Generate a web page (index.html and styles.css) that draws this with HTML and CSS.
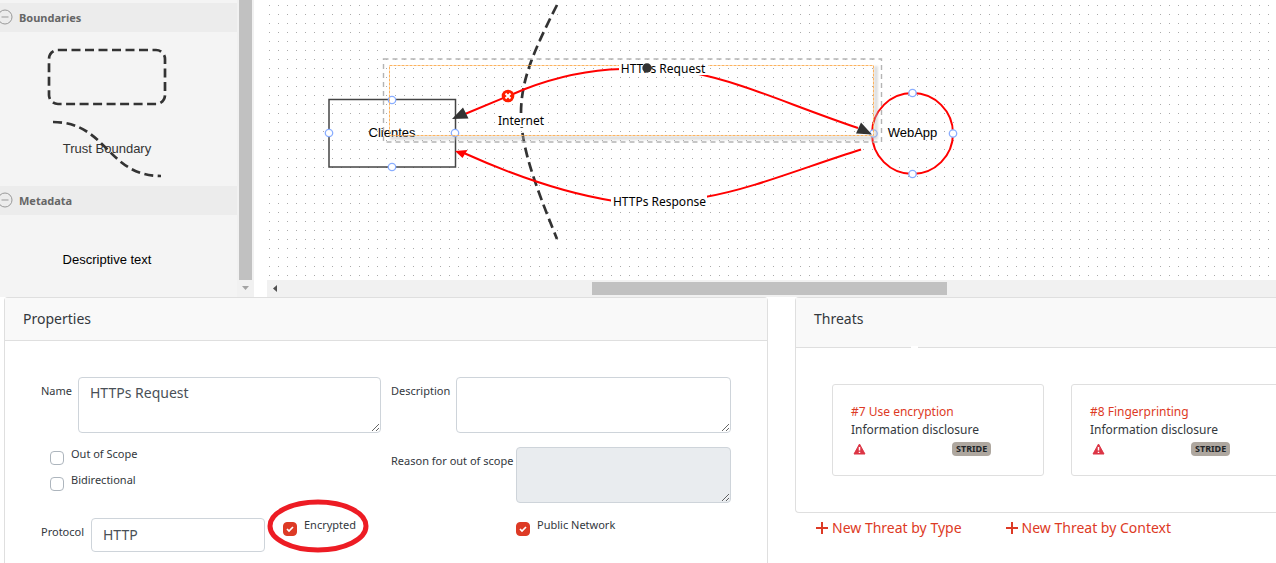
FILE: index.html
```html
<!DOCTYPE html>
<html lang="en">
<head>
<meta charset="utf-8">
<title>Threat model editor</title>
<link rel="stylesheet" href="styles.css">
</head>
<body>
<section class="workspace">
  <aside class="stencil">
    <div class="stencil-groups">
      <h3 class="group-title"><svg class="toggle" viewBox="0 0 18 18" width="18" height="18"><circle cx="9" cy="9" r="7"/><path d="M5.500 9h7"/></svg>Boundaries</h3>
      <svg class="shapes" width="237" height="154" viewBox="0 32 237 154">
        <rect class="boundary" x="49" y="50" width="116" height="54" rx="9" stroke-dasharray="9 4.500"/>
        <text class="shape-text soft" x="107" y="153">Trust Boundary</text>
        <path class="boundary" d="M53 122C107 122 107 176 161 176" stroke-dasharray="9 4.500"/>
      </svg>
      <h3 class="group-title"><svg class="toggle" viewBox="0 0 18 18" width="18" height="18"><circle cx="9" cy="9" r="7"/><path d="M5.500 9h7"/></svg>Metadata</h3>
      <svg class="shapes" width="237" height="80" viewBox="0 215 237 80">
        <text class="shape-text" x="107" y="264">Descriptive text</text>
      </svg>
    </div>
    <div class="scroll-y"><div class="thumb-y"></div><svg class="arrow-y" width="17" height="17"><path d="M5 6h7l-3.500 4z"/></svg></div>
  </aside>
  <main class="canvas">
    <div class="paper">
      <svg class="diagram" width="1009" height="280" viewBox="267 0 1009 280">
        <defs><filter id="glow" x="-10%" y="-10%" width="120%" height="130%"><feGaussianBlur stdDeviation="1"/></filter></defs>
        <path class="boundary" d="M557 5C509 99 509 121 557 239" stroke-dasharray="10 5"/>
        <rect class="label-bg" x="497" y="113" width="49" height="14"/>
        <text class="edge-text" x="521" y="125">Internet</text>
        <rect class="entity" x="329" y="99.500" width="126.500" height="67.500"/>
        <text class="node-text" x="392" y="137">Clientes</text>
        <circle class="process" cx="912.500" cy="133.500" r="40.500"/>
        <text class="node-text" x="912.500" y="137">WebApp</text>
        <circle class="port" cx="392" cy="100" r="3.700"/>
        <circle class="port" cx="455" cy="133" r="3.700"/>
        <circle class="port" cx="392" cy="167" r="3.700"/>
        <circle class="port" cx="329" cy="133" r="3.700"/>
        <circle class="port" cx="912.500" cy="93" r="3.700"/>
        <circle class="port" cx="953" cy="133.500" r="3.700"/>
        <circle class="port" cx="912.500" cy="174" r="3.700"/>
        <circle class="port" cx="873.500" cy="133.500" r="3.700"/>
        <path class="shade" d="M390 138H876V66" filter="url(#glow)"/>
        <rect class="outer-frame" x="383.500" y="59" width="498" height="83"/>
        <rect class="inner-frame" x="389.500" y="65.500" width="484" height="70"/>
        <path class="flow" d="M465 153.500C515 176 563 193 614 201M705 197C752 189 805 167 861 149.500"/>
        <path class="flow" d="M465 114L525 89C556 77 586 70 622 69M694 73C744 83 790 105 858 128"/>
        <path class="flow-head" d="M455 151L467.500 150L462.500 158z"/>
        <path class="handle" d="M452 119L463 107.500L468.500 118.500zM872 134.500L861 122.500L856 133.500z"/>
        <rect class="label-bg" x="619" y="61" width="89" height="14"/>
        <text class="edge-text" x="663" y="73">HTTPs Request</text>
        <rect class="label-bg" x="611" y="194" width="96" height="14"/>
        <text class="edge-text" x="659.500" y="206">HTTPs Response</text>
        <circle class="handle" cx="647" cy="68" r="4.700"/>
        <circle class="remove" cx="508" cy="96" r="6.300"/>
        <path class="remove-x" d="M505.500 93.500l5 5m0-5l-5 5"/>
      </svg>
    </div>
    <div class="scroll-x"><svg class="arrow-x" width="17" height="17"><path d="M10 5v7L6 8.500z"/></svg><div class="thumb-x"></div></div>
  </main>
</section>
<section class="details">
  <section class="card properties">
    <h2 class="card-title">Properties</h2>
    <form class="fields">
      <div class="field name"><label for="name">Name</label><textarea id="name">HTTPs Request</textarea></div>
      <div class="field description"><label for="description">Description</label><textarea id="description"></textarea></div>
      <div class="checks">
        <div class="check"><input type="checkbox" id="scope"><label for="scope">Out of Scope</label></div>
        <div class="check"><input type="checkbox" id="both"><label for="both">Bidirectional</label></div>
      </div>
      <div class="field reason"><label for="reason">Reason for out of scope</label><textarea id="reason" disabled></textarea></div>
      <div class="field protocol">
        <label for="protocol">Protocol</label>
        <select id="protocol"><option>HTTP</option></select>
        <div class="check encrypted"><input type="checkbox" id="encrypted" checked><label for="encrypted">Encrypted</label>
          <svg class="mark" width="104" height="56" viewBox="0 0 104 56"><ellipse cx="52" cy="28" rx="48" ry="24"/></svg>
        </div>
      </div>
      <div class="check public"><input type="checkbox" id="public" checked><label for="public">Public Network</label></div>
    </form>
  </section>
  <section class="threats">
    <div class="card threat-card">
      <h2 class="card-title threat-title">Threats</h2>
      <div class="threat-list">
        <article class="threat">
          <a href="#">#7 Use encryption</a>
          <p>Information disclosure</p>
          <div class="meta"><svg class="warn" width="13" height="12" viewBox="0 0 13 12"><path d="M6.500 1L12 11H1z"/><path class="bang" d="M6.500 4v3.500M6.500 8.800v1.200"/></svg><span class="badge">STRIDE</span></div>
        </article>
        <article class="threat">
          <a href="#">#8 Fingerprinting</a>
          <p>Information disclosure</p>
          <div class="meta"><svg class="warn" width="13" height="12" viewBox="0 0 13 12"><path d="M6.500 1L12 11H1z"/><path class="bang" d="M6.500 4v3.500M6.500 8.800v1.200"/></svg><span class="badge">STRIDE</span></div>
        </article>
      </div>
    </div>
    <nav class="actions">
      <a href="#"><svg class="plus" width="12" height="12"><path d="M6 0v12M0 6h12"/></svg>New Threat by Type</a>
      <a href="#"><svg class="plus" width="12" height="12"><path d="M6 0v12M0 6h12"/></svg>New Threat by Context</a>
    </nav>
  </section>
</section>
</body>
</html>
```
FILE: styles.css
```css
* { box-sizing: border-box; }
body {
  margin: 0;
  height: 100vh;
  display: flex;
  flex-direction: column;
  overflow: hidden;
  background: #fff;
  color: #33383d;
  font-family: "Noto Sans", sans-serif;
  font-size: 12px;
}
h2, h3, p { margin: 0; font-weight: 400; }
svg { display: block; flex: none; }
a { color: #dd3a25; text-decoration: none; }

.workspace { display: flex; gap: 13px; flex: none; }
.stencil { display: flex; flex: none; background: #f4f4f4; }
.stencil-groups { padding-top: 3px; }
.group-title {
  display: flex;
  align-items: center;
  gap: 5px;
  height: 29px;
  margin-left: -4px;
  padding-bottom: 1px;
  background: #ececec;
  color: #666;
  font-size: 11px;
  font-weight: 700;
}
.toggle { fill: none; stroke: #999; stroke-width: 1; }
.boundary { fill: none; stroke: #333; stroke-width: 2.700; }
.shape-text { font: 13px "Liberation Sans", sans-serif; text-anchor: middle; fill: #000; }
.soft { fill: #333; }
.scroll-y { display: flex; flex-direction: column; width: 17px; background: #f1f1f1; }
.thumb-y { flex: 1; margin: 0 2px; background: #c1c1c1; }
.arrow-y { fill: #a3a3a3; }

.canvas { flex: 1; min-width: 0; display: flex; flex-direction: column; }
.paper {
  flex: 1;
  overflow: hidden;
  background-image: linear-gradient(90deg, #fff 0 2px, transparent 2px 3px, #fff 3px), linear-gradient(#fff 0 5px, #aaa 5px 6px, #fff 6px);
  background-size: 9px 9px;
}
.scroll-x { display: flex; height: 17px; background: #f1f1f1; }
.arrow-x { fill: #505050; }
.thumb-x { width: 35.200%; margin: 2px 0 2px 30.500%; background: #c1c1c1; }

.edge-text { font: 12px "Noto Sans", sans-serif; text-anchor: middle; fill: #000; }
.node-text { font: 13px "Liberation Sans", sans-serif; text-anchor: middle; fill: #000; }
.label-bg { fill: #fff; }
.entity { fill: none; stroke: #444; stroke-width: 1.500; }
.process { fill: none; stroke: #f00; stroke-width: 2; }
.port { fill: #fff; stroke: #8aaeff; stroke-width: 1.300; }
.shade { fill: none; stroke: #bbb; stroke-width: 4; opacity: .45; }
.outer-frame { fill: none; stroke: #b4b4b4; stroke-width: 1.400; stroke-dasharray: 5 4; }
.inner-frame { fill: none; stroke: #fcb35f; stroke-dasharray: 3 1; }
.flow { fill: none; stroke: #f00; stroke-width: 2; }
.flow-head { fill: #f00; }
.handle { fill: #333; }
.remove { fill: #ff1d00; }
.remove-x { stroke: #fff; stroke-width: 2; }

.details {
  flex: 1;
  min-height: 0;
  display: grid;
  grid-template-columns: minmax(0, 764fr) minmax(0, 481fr);
  gap: 27px;
  padding-left: 4px;
}
.card { border: 1px solid #dfdfdf; border-radius: 4px; }
.properties { border-bottom: 0; }
.card-title {
  height: 43px;
  padding: 0 18px;
  border-bottom: 1px solid #dfdfdf;
  background: #f9f9f9;
  font-size: 14px;
  line-height: 41px;
}
.fields {
  display: grid;
  grid-template-columns: minmax(0, 1fr) minmax(0, 1fr);
  gap: 14px 10px;
  padding: 36px;
}
.field { display: flex; gap: 9px; align-items: flex-start; }
label { font-size: 11px; line-height: 14px; white-space: nowrap; }
.field > label { flex: none; padding-top: 7px; }
.name > label { width: 28px; }
.description > label { width: 56px; }
.reason > label { width: 116px; }
.protocol > label { width: 41px; }
textarea, select {
  flex: 1;
  min-width: 0;
  border: 1px solid #ced4da;
  border-radius: 4px;
  background: #fff;
  color: #495057;
  font: 14px/20px "Noto Sans", sans-serif;
}
textarea { height: 56px; padding: 5px 11px; resize: both; }
textarea:disabled { background: #e9ecef; }
.checks { display: grid; align-content: start; gap: 12px; padding-left: 9px; }
.check { display: flex; gap: 7px; align-items: flex-start; }
.check input {
  appearance: none;
  flex: none;
  width: 14px;
  height: 14px;
  margin: 4px 0 0;
  border: 1px solid #adb5bd;
  border-radius: 4px;
}
.checks .check { height: 14px; }
.check input:checked {
  border-color: #dd3a25;
  background: #dd3a25 url("data:image/svg+xml,%3Csvg xmlns='http://www.w3.org/2000/svg' viewBox='0 0 8 8'%3E%3Cpath fill='none' stroke='%23fff' stroke-width='1.700' d='M1 4l2 2 4-4'/%3E%3C/svg%3E") center / 8px 8px no-repeat;
}
.protocol, .public { padding-top: 1px; }
.protocol select { flex: none; width: 174px; height: 34px; padding: 0 11px; appearance: none; }
.encrypted { position: relative; margin-left: 9px; }
.mark { position: absolute; left: -17px; top: -20px; fill: none; stroke: #ed1c24; stroke-width: 5; pointer-events: none; }
.public { padding-left: 125px; }

.threats { overflow: hidden; }
.threat-card { border-right: 0; border-radius: 4px 0 0 4px; }
.threat-title { position: relative; height: 50px; }
.threat-title::after { content: ""; position: absolute; left: 115px; bottom: -2px; width: 7px; height: 3px; background: #fff; }
.threat-list { display: flex; gap: 27px; padding: 36px; }
.threat { flex: none; width: 212px; padding: 18px 18px 17px; border: 1px solid #dfdfdf; border-radius: 3px; line-height: 18px; }
.threat a { display: block; }
.meta { display: grid; grid-template-columns: 101px auto; justify-content: start; align-items: center; height: 18px; margin-top: 1px; }
.warn { margin-left: 2px; fill: #dc3545; stroke: #dc3545; stroke-linejoin: round; }
.warn .bang { stroke: #fff; stroke-width: 1.500; }
.badge { padding: 0 4px; border-radius: 4px; background: #aea79f; color: #212529; font-size: 9px; font-weight: 700; line-height: 14px; }
.actions { display: flex; gap: 44px; padding: 5px 21px; font-size: 14px; line-height: 20px; }
.actions a { display: flex; gap: 4px; align-items: center; white-space: nowrap; }
.plus { stroke: #dd3a25; stroke-width: 2; }
```
